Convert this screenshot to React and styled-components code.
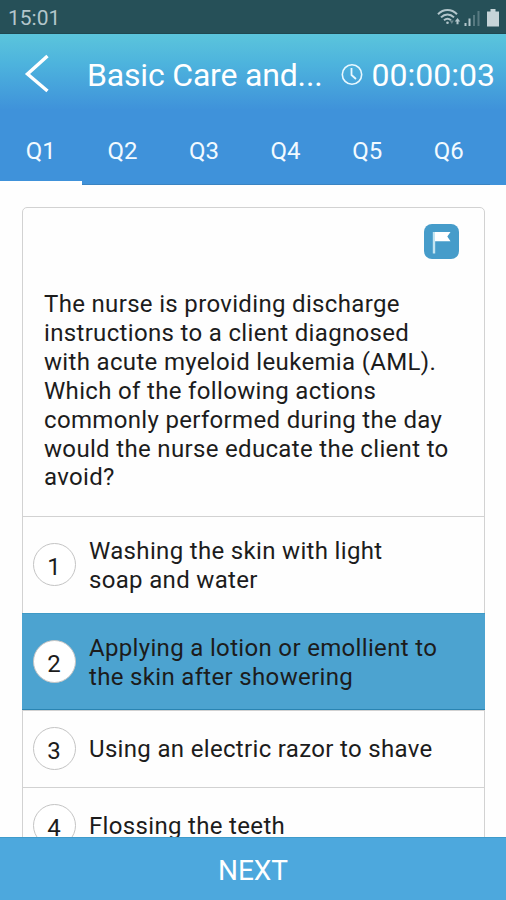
import React, { useState } from 'react';
import styled, { createGlobalStyle } from 'styled-components';

const GlobalStyle = createGlobalStyle`
  * {
    box-sizing: border-box;
  }

  body {
    margin: 0;
    background: #ffffff;
    font-family: Roboto, sans-serif;
  }
`;

const Screen = styled.div`
  display: flex;
  flex-direction: column;
  height: 900px;
  overflow: hidden;
  background: #fefefe;
`;

const StatusBar = styled.div`
  display: flex;
  align-items: center;
  justify-content: space-between;
  flex: none;
  height: 34px;
  padding: 1px 5px 0 8px;
  background: #265058;
  border-bottom: 1px solid #1f4850;
`;

const StatusTime = styled.span`
  padding-top: 1px;
  font-size: 21px;
  line-height: 32px;
  color: #b3c6cb;
`;

const Header = styled.header`
  flex: none;
  height: 151px;
  background: linear-gradient(#5bc5dc 0, #4db3dd 30px, #3f92da 76px, #3f92da 100%);
  color: #ffffff;
`;

const TitleBar = styled.div`
  display: flex;
  align-items: center;
  height: 82px;
  padding: 0 11px 0 24px;
`;

const BackButton = styled.button`
  display: flex;
  width: 63px;
  padding: 0 0 2px;
  border: none;
  background: none;
  cursor: pointer;
`;

const Title = styled.h1`
  flex: 1;
  margin: 0;
  font-size: 32px;
  font-weight: 400;
  line-height: 38px;
  letter-spacing: -0.18px;
  white-space: nowrap;
`;

const Timer = styled.div`
  display: flex;
  align-items: center;
  gap: 9px;
  font-size: 32px;
  line-height: 38px;
`;

const Tabs = styled.nav`
  display: flex;
  height: 69px;
`;

const Tab = styled.button`
  flex: none;
  width: 81.6px;
  padding: ${({ $active }) => ($active ? '4px 0 0' : '4px 0 3px')};
  border: none;
  border-bottom: ${({ $active }) => ($active ? '4px solid #ffffff' : '1px solid #3b84c2')};
  background: none;
  color: #f2faff;
  font-family: inherit;
  font-size: 24px;
  line-height: 60px;
  cursor: pointer;
`;

const Content = styled.main`
  flex: 1;
  min-height: 0;
  padding: 22px 21px 0 22px;
  overflow: hidden;
`;

const Card = styled.section`
  height: 700px;
  border: 1px solid #d2d2d2;
  border-radius: 5px;
`;

const FlagRow = styled.div`
  display: flex;
  justify-content: flex-end;
  padding: 16px 25px 0 0;
`;

const FlagButton = styled.button`
  display: flex;
  width: 35px;
  height: 35px;
  padding: 0;
  border: none;
  border-radius: 8px;
  background: #469cca;
  cursor: pointer;
`;

const Question = styled.p`
  height: 257px;
  margin: 0;
  padding: 31px 0 0 21px;
  font-size: 24px;
  line-height: 28.9px;
  letter-spacing: 0.33px;
  color: #1c1c1c;
  white-space: pre-line;
`;

const Option = styled.div`
  display: flex;
  align-items: center;
  height: ${({ $tall }) => ($tall ? '97px' : '77px')};
  margin: 0 -1px;
  padding-left: 11px;
  border-top: 1px solid ${({ $selected }) => ($selected ? '#3f9ac6' : '#d2d2d2')};
  background: ${({ $selected }) => ($selected ? '#4ca3d0' : 'transparent')};
  box-shadow: ${({ $selected }) => ($selected ? 'inset 0 -1px #2a84b2' : 'none')};
  cursor: pointer;
`;

const OptionNumber = styled.span`
  flex: none;
  width: 43px;
  height: 43px;
  margin: 0 13px 2px 0;
  padding-top: 2px;
  border: 1px solid #c4c4c4;
  border-radius: 50%;
  background: #ffffff;
  font-size: 24px;
  line-height: 42px;
  text-align: center;
  text-indent: -1px;
  color: #1c1c1c;
`;

const OptionText = styled.span`
  padding-top: 1px;
  font-size: 24px;
  line-height: 28.8px;
  letter-spacing: 0.33px;
  color: #1c1c1c;
  white-space: pre-line;
`;

const NextButton = styled.button`
  flex: none;
  height: 63px;
  padding: 3px 0 0;
  border: none;
  border-top: 1px solid #3f9bcb;
  background: #4da8dd;
  color: #ffffff;
  font-family: inherit;
  font-size: 28px;
  cursor: pointer;
`;

const tabs = ['Q1', 'Q2', 'Q3', 'Q4', 'Q5', 'Q6'];

const question = `The nurse is providing discharge
instructions to a client diagnosed
with acute myeloid leukemia (AML).
Which of the following actions
commonly performed during the day
would the nurse educate the client to
avoid?`;

const options = [
  { text: 'Washing the skin with light\nsoap and water', tall: true },
  { text: 'Applying a lotion or emollient to\nthe skin after showering', tall: true },
  { text: 'Using an electric razor to shave' },
  { text: 'Flossing the teeth' },
];

const StatusIcons = () => (
  <svg width="64" height="22" viewBox="0 0 64 22" fill="none">
    {/* wifi */}
    <g stroke="#b3c6cb" strokeWidth="2">
      <path d="M1 8.2C6.5 2.6 14.5 2.6 20 8.2" />
      <path d="M4 11.4C7.8 7.6 13.2 7.6 17 11.4" />
      <path d="M7 14.3C9.3 12.3 11.7 12.3 14 14.3" />
    </g>
    <circle cx="10.5" cy="16.8" r="1.3" fill="#b3c6cb" />
    <path d="M12.8 14.5h4l-2 3.5z" fill="#6f8b91" />
    <path d="M17.8 15.5l2.7-3.5 2.7 3.5h-1.7v2.7h-2v-2.7z" fill="#b3c6cb" />
    {/* signal */}
    <path d="M27.5 17h2v3h-2zM31.5 12.5h2V20h-2z" fill="#b3c6cb" />
    <path d="M36 9h2v11h-2zM40.5 5h2v15h-2z" fill="#587a81" />
    {/* battery */}
    <path d="M50 5.5h3.5V3h5v2.5H62V20.5H50z" fill="#c6d4d8" />
  </svg>
);

const BackIcon = () => (
  <svg width="26" height="40" viewBox="0 0 26 40" fill="none">
    <path d="M23.5 2L3.5 20l20 17" stroke="#ffffff" strokeWidth="3.4" />
  </svg>
);

const ClockIcon = () => (
  <svg width="22" height="22" viewBox="0 0 22 22" fill="none" stroke="#e8f8ff">
    <circle cx="11" cy="10.5" r="9.7" strokeWidth="1.6" />
    <path d="M10.5 4v7l4.5 4" strokeWidth="1.8" />
  </svg>
);

const FlagIcon = () => (
  <svg width="35" height="35" viewBox="0 0 35 35" fill="none">
    <path d="M10 8v21.5" stroke="#c4e5f2" strokeWidth="2.4" />
    <path d="M11 8h15.5l-3.2 4.5 3.2 4.8H11z" fill="#ffffff" />
  </svg>
);

const App = () => {
  const [activeTab, setActiveTab] = useState(0);
  const [selected, setSelected] = useState(1);

  return (
    <>
      <GlobalStyle />
      <Screen>
        <StatusBar>
          <StatusTime>15:01</StatusTime>
          <StatusIcons />
        </StatusBar>

        <Header>
          <TitleBar>
            <BackButton aria-label="Back">
              <BackIcon />
            </BackButton>
            <Title>Basic Care and...</Title>
            <Timer>
              <ClockIcon />
              00:00:03
            </Timer>
          </TitleBar>
          <Tabs>
            {tabs.map((tab, index) => (
              <Tab key={tab} $active={index === activeTab} onClick={() => setActiveTab(index)}>
                {tab}
              </Tab>
            ))}
          </Tabs>
        </Header>

        <Content>
          <Card>
            <FlagRow>
              <FlagButton aria-label="Flag question">
                <FlagIcon />
              </FlagButton>
            </FlagRow>
            <Question>{question}</Question>
            {options.map((option, index) => (
              <Option
                key={option.text}
                $tall={option.tall}
                $selected={index === selected}
                onClick={() => setSelected(index)}
              >
                <OptionNumber>{index + 1}</OptionNumber>
                <OptionText>{option.text}</OptionText>
              </Option>
            ))}
          </Card>
        </Content>

        <NextButton>NEXT</NextButton>
      </Screen>
    </>
  );
};

export default App;
